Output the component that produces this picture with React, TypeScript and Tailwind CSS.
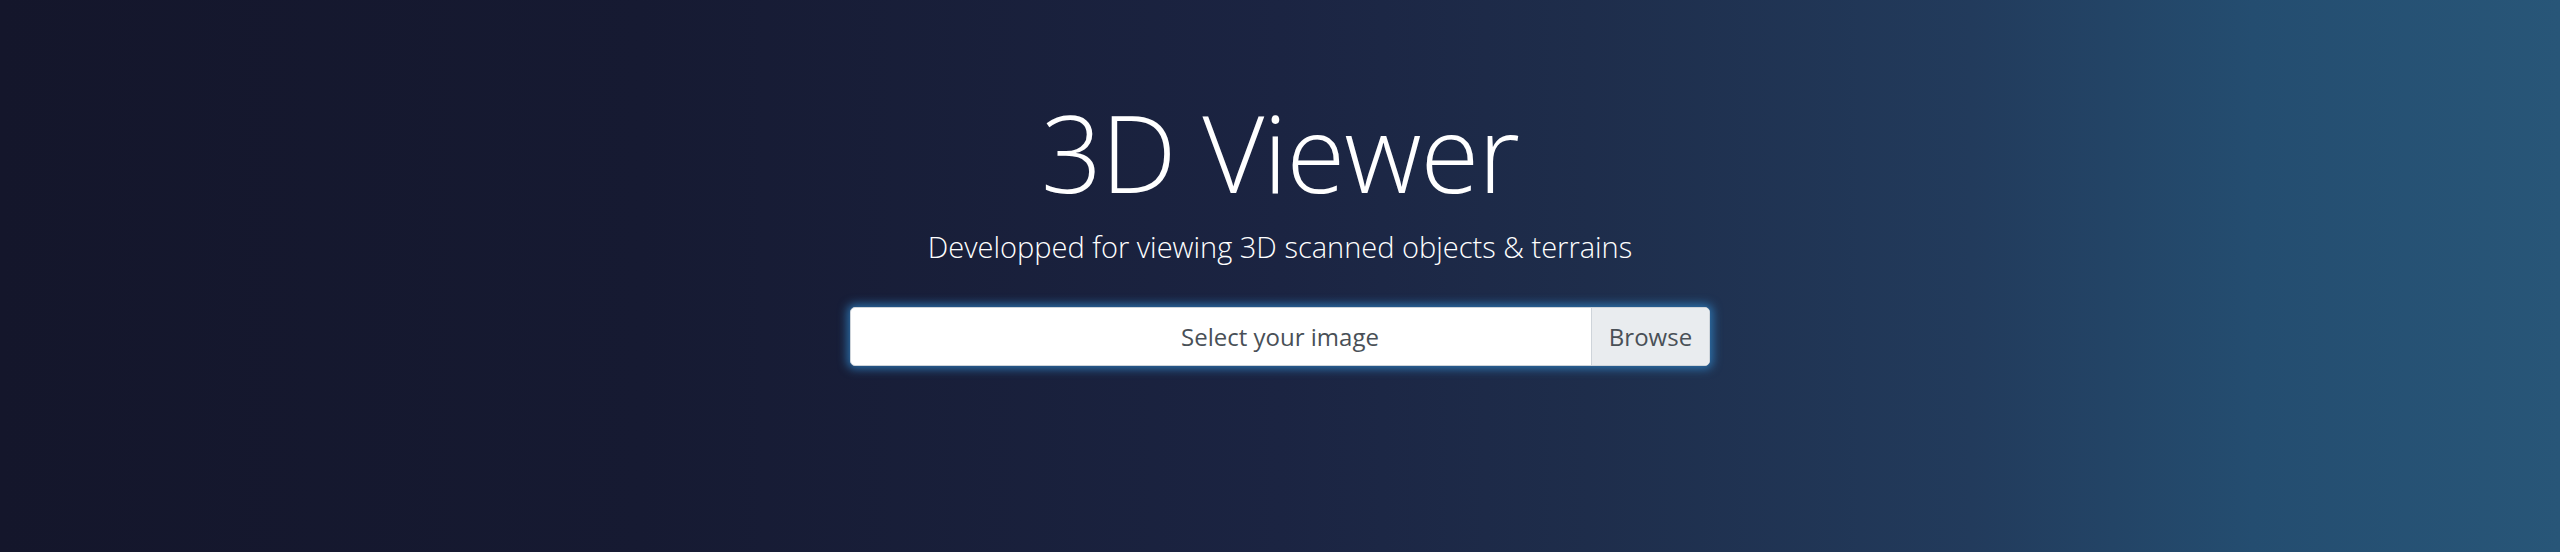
export default function App() {
  return (
    <div className="w-full h-[552px] bg-[linear-gradient(to_right,#14162b_0%,#161a32_25%,#1b2442_50%,#1e2d4b_62%,#223b5c_77%,#244d70_88%,#285678_100%)] font-['Open_Sans',sans-serif] text-white">
      <div className="flex flex-col items-center pt-[88px]">
        <h1 className="text-[107px] leading-[1.2] font-light tracking-[-1px]">3D Viewer</h1>
        <p className="mt-[14px] text-[29px] leading-[1.2] font-light">
          Developped for viewing 3D scanned objects &amp; terrains
        </p>
        <div className="relative mt-[42px] w-[860px] h-[59px] flex rounded-[5px] border border-[#ced4da] bg-white shadow-[0_0_10px_3px_rgba(50,140,210,0.7)] overflow-hidden">
          <div className="flex-1 flex items-center justify-center text-[24px] text-[#495057]">
            Select your image
          </div>
          <div className="absolute right-0 top-0 bottom-0 w-[118px] flex items-center justify-center border-l border-[#ced4da] bg-[#e9ecef] text-[24px] text-[#495057]">
            Browse
          </div>
        </div>
      </div>
    </div>
  );
}
